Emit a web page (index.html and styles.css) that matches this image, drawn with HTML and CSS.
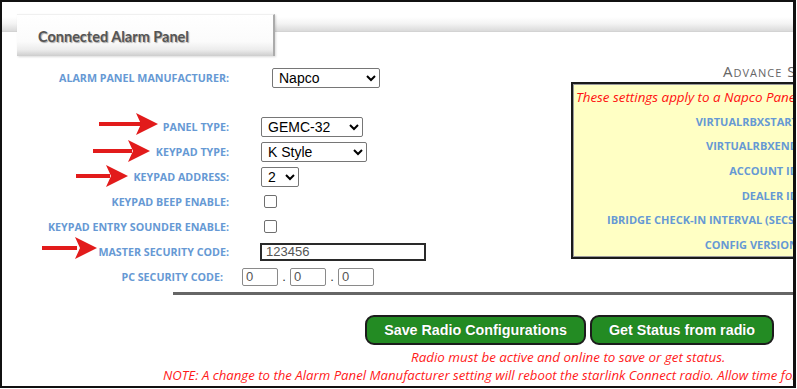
FILE: index.html
```html
<!DOCTYPE html>
<html>
<head>
<meta charset="utf-8">
<link rel="stylesheet" href="styles.css">
</head>
<body>
<div class="frame">
  <div class="header">
    <div class="tab">Connected Alarm Panel</div>
  </div>
  <div class="main">
    <div class="form">
      <div class="row row-first">
        <label class="lbl">Alarm Panel Manufacturer:</label>
        <div class="ctl"><select class="sel sel-manuf"><option>Napco</option></select></div>
      </div>
      <div class="row">
        <label class="lbl">Panel Type:</label>
        <div class="ctl"><select class="sel sel-panel"><option>GEMC-32</option></select></div>
      </div>
      <div class="row">
        <label class="lbl">Keypad Type:</label>
        <div class="ctl"><select class="sel sel-keypad"><option>K Style</option></select></div>
      </div>
      <div class="row">
        <label class="lbl">Keypad Address:</label>
        <div class="ctl"><select class="sel sel-addr"><option>2</option></select></div>
      </div>
      <div class="row">
        <label class="lbl">Keypad Beep Enable:</label>
        <div class="ctl"><input type="checkbox" class="chk"></div>
      </div>
      <div class="row">
        <label class="lbl">Keypad Entry Sounder Enable:</label>
        <div class="ctl"><input type="checkbox" class="chk"></div>
      </div>
      <div class="row">
        <label class="lbl">Master Security Code:</label>
        <div class="ctl"><input type="text" class="txt-master" value="123456"></div>
      </div>
      <div class="row row-pc">
        <label class="lbl">PC Security Code:</label>
        <div class="ctl ctl-pc">
          <input type="text" class="txt-pc" value="0"><span class="dot">.</span><input type="text" class="txt-pc" value="0"><span class="dot">.</span><input type="text" class="txt-pc" value="0">
        </div>
      </div>
    </div>
    <div class="advance">
      <div class="adv-title">Advance Settings</div>
      <div class="adv-box">
        <div class="adv-note">These settings apply to a Napco Panel only. Please use caution.</div>
        <div class="adv-row"><span class="lbl adv-lbl">VirtualRbxStart:</span></div>
        <div class="adv-row"><span class="lbl adv-lbl">VirtualRbxEnd:</span></div>
        <div class="adv-row"><span class="lbl adv-lbl">Account ID:</span></div>
        <div class="adv-row"><span class="lbl adv-lbl">Dealer ID:</span></div>
        <div class="adv-row"><span class="lbl adv-lbl">iBridge Check-in Interval (secs):</span></div>
        <div class="adv-row"><span class="lbl adv-lbl">Config Version:</span></div>
      </div>
    </div>
  </div>
  <div class="rule"></div>
  <div class="actions">
    <button class="btn btn-save">Save Radio Configurations</button>
    <button class="btn btn-status">Get Status from radio</button>
  </div>
  <div class="msg msg-1">Radio must be active and online to save or get status.</div>
  <div class="msg msg-2">NOTE: A change to the Alarm Panel Manufacturer setting will reboot the starlink Connect radio. Allow time for the radio to restart.</div>

  <svg class="arrows" width="797" height="389" viewBox="0 0 797 389">
    <g fill="#e21b1b">
      <rect x="99" y="122" width="42" height="4"/>
      <polygon points="136,113 158,124 136,135 141,124"/>
      <rect x="93" y="149" width="39" height="4"/>
      <polygon points="128,140 150,151 128,162 133,151"/>
      <rect x="76" y="174" width="34" height="4"/>
      <polygon points="106,165 128,176 106,187 111,176"/>
      <rect x="42" y="246" width="35" height="4"/>
      <polygon points="75,237 97,248 75,259 80,248"/>
    </g>
  </svg>
</div>
</body>
</html>
```

FILE: styles.css
```css
* { box-sizing: border-box; }

html, body {
  margin: 0;
  padding: 0;
  background: #fff;
  width: 797px;
  height: 389px;
  overflow: hidden;
}

.frame {
  position: relative;
  width: 796px;
  height: 388px;
  border: 2px solid #111;
  border-right-width: 3px;
  overflow: hidden;
  font-family: "Open Sans", "DejaVu Sans", sans-serif;
}

.header {
  margin-top: 12px;
  height: 42px;
  padding-left: 15px;
  background: linear-gradient(to bottom, #ffffff 0%, #f3f3f3 45%, #dcdcdc 90%, #cfcfcf 100%) no-repeat 0 3px / 100% 15px;
}

.tab {
  width: 258px;
  height: 42px;
  display: flex;
  align-items: center;
  padding-left: 21px;
  padding-top: 2px;
  background: linear-gradient(to bottom, #ffffff 0%, #fbfbfb 65%, #ececec 85%, #cdcdcd 100%);
  border-right: 2px solid #ababab;
  border-top: 1px solid #f0f0f0;
  box-shadow: 1px 1px 2px rgba(0,0,0,0.15);
  font-family: "Lato", "Open Sans", sans-serif;
  font-weight: 700;
  font-size: 14.5px;
  color: #555;
  text-shadow: 1px 1px 1px #a8a8a8;
}

.main {
  display: flex;
  padding-top: 9px;
}

.form {
  width: 569px;
  flex: none;
}

.row {
  display: grid;
  grid-template-columns: 227px auto;
  column-gap: 31px;
  align-items: center;
  height: 25px;
}

.row-first { margin-bottom: 24px; }

.lbl {
  font-family: "Open Sans", sans-serif;
  font-weight: 700;
  font-size: 10.7px;
  text-transform: uppercase;
  color: #6699d4;
  text-align: right;
  white-space: nowrap;
}

.ctl {
  display: flex;
  align-items: center;
}

.sel {
  height: 20px;
  font-family: "Liberation Sans", Arial, sans-serif;
  font-size: 14px;
  color: #000;
  background: #fff;
  border: 1px solid #767676;
  border-radius: 2px;
  padding: 0 0 0 2px;
  margin: 0;
}

.sel-manuf { width: 108px; margin-left: 12px; }
.sel-panel { width: 102px; margin-left: 1px; }
.sel-keypad { width: 106px; margin-left: 1px; }
.sel-addr { width: 38px; margin-left: 1px; }

.chk {
  appearance: none;
  -webkit-appearance: none;
  width: 13px;
  height: 13px;
  margin: 0 0 0 4px;
  border: 1px solid #6f6f6f;
  border-radius: 2px;
  background: #fff;
}

.txt-master {
  width: 166px;
  height: 18px;
  margin: 0;
  border: 2px solid #2a2a2a;
  padding: 0 4px;
  font-family: "Liberation Sans", Arial, sans-serif;
  font-size: 13px;
  color: #555;
  outline: none;
}

.row-pc .lbl { padding-right: 6px; }
.ctl-pc { margin-left: -18px; }

.txt-pc {
  width: 36px;
  height: 18px;
  margin: 0;
  border: 1px solid #8a8a8a;
  border-radius: 2px;
  padding: 0 3px;
  font-family: "Liberation Sans", Arial, sans-serif;
  font-size: 13px;
  color: #555;
  outline: none;
}

.dot {
  width: 12px;
  text-align: center;
  font-family: "Liberation Sans", Arial, sans-serif;
  font-size: 13px;
  color: #333;
}

.advance {
  flex: none;
  width: 300px;
  margin-top: -4px;
}

.adv-title {
  padding-left: 152px;
  height: 20px;
  line-height: 20px;
  font-family: "Open Sans", sans-serif;
  font-variant: small-caps;
  font-size: 15px;
  letter-spacing: 1px;
  color: #666;
  white-space: nowrap;
}

.adv-box {
  margin-top: 1px;
  height: 177px;
  border: 2px solid #1a1a1a;
  box-shadow: inset 0 0 0 1px #9a9a9a;
  background: #ffffc4;
  padding: 4px 0 0 3px;
}

.adv-note {
  height: 18px;
  line-height: 18px;
  font-family: "Open Sans", sans-serif;
  font-style: italic;
  font-size: 13.4px;
  color: #ff1010;
  white-space: nowrap;
}

.adv-row {
  height: 24.6px;
  display: flex;
  align-items: center;
  justify-content: flex-end;
  width: 225px;
}

.adv-lbl { font-size: 11px; }

.adv-note + .adv-row { margin-top: 3px; }

.rule {
  margin-top: 3px;
  margin-left: 171px;
  height: 3px;
  background: #666;
}

.actions {
  display: flex;
  gap: 4px;
  margin-top: 20px;
  margin-left: 363px;
}

.btn {
  height: 30px;
  margin: 0;
  padding: 0;
  background: #238b23;
  border: 2px solid #1c1c1c;
  border-radius: 9px;
  color: #fff;
  font-family: "Liberation Sans", Arial, sans-serif;
  font-weight: 700;
  font-size: 14.3px;
  text-shadow: 0 0 1px rgba(0,0,0,0.3);
}

.btn-save { width: 221px; }
.btn-status { width: 184px; }

.msg {
  font-family: "Open Sans", sans-serif;
  font-style: italic;
  line-height: 16px;
  color: #ff1a1a;
  white-space: nowrap;
}

.msg-1 { margin-top: 4px; margin-left: 409px; font-size: 13.4px; }
.msg-2 { margin-top: 2px; margin-left: 161px; font-size: 13.2px; }

.arrows {
  position: absolute;
  left: -2px;
  top: -2px;
  pointer-events: none;
}
```
